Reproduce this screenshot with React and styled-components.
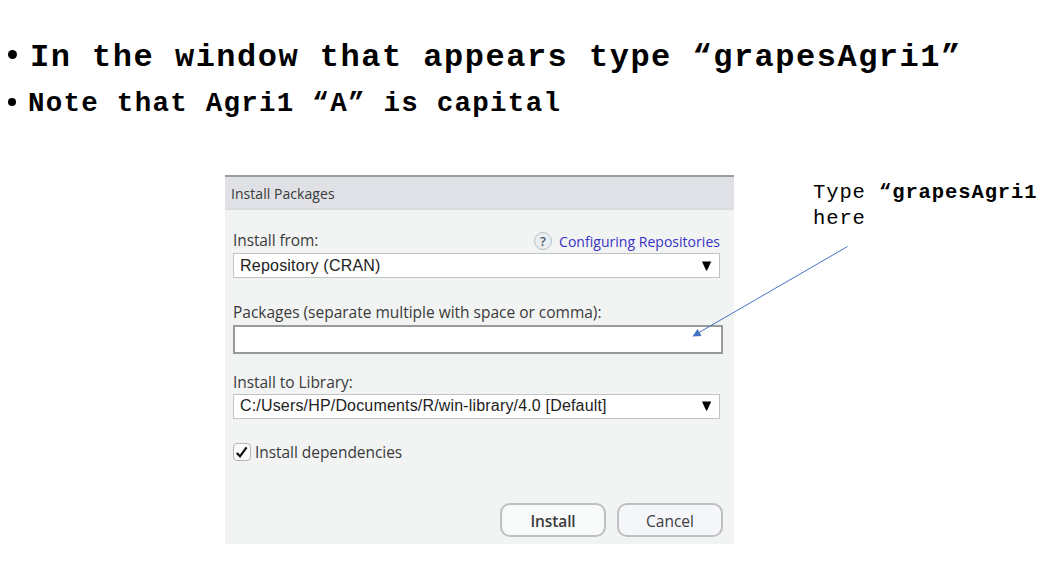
import React from 'react';
import styled, { createGlobalStyle } from 'styled-components';

const GlobalStyle = createGlobalStyle`
  * { box-sizing: border-box; }
  body { margin: 0; background: #fff; overflow: hidden; }
`;

const Slide = styled.main`
  position: relative;
  width: 1039px;
  height: 580px;
  overflow: hidden;
  background: #fff;
  color: #000;
  font-family: 'Courier New', 'Liberation Mono', monospace;
`;

const Bullets = styled.ul`
  list-style: none;
  margin: 0;
  padding: 32px 0 0 7px;
  height: 175px;
`;

const Bullet = styled.li`
  display: flex;
  align-items: center;
  gap: ${(p) => p.$gap}px;
  height: 47px;
  font-size: ${(p) => p.$size}px;
  letter-spacing: ${(p) => p.$track}px;
  font-weight: 700;
  white-space: pre;
`;

const BulletText = styled.span`
  padding-top: ${(p) => p.$drop}px;
`;

const Dot = styled.span`
  flex: none;
  width: ${(p) => p.$size}px;
  height: ${(p) => p.$size}px;
  border-radius: 50%;
  background: #000;
  margin: 0 0 2px 1px;
`;

const Content = styled.div`
  display: flex;
  align-items: flex-start;
  padding-left: 225px;
`;

const Dialog = styled.section`
  flex: none;
  width: 509px;
  height: 369px;
  background: #f2f4f4;
  color: #3a3a3a;
  font-family: 'Open Sans', 'Noto Sans', sans-serif;
`;

const TitleBar = styled.header`
  height: 35px;
  padding: 0 6px;
  border-top: 2px solid #9c9d9e;
  border-bottom: 2px solid #dbdce0;
  background: #e0e1e6;
  font-size: 14px;
  line-height: 34px;
  letter-spacing: ${(p) => p.$track}px;
`;

const Form = styled.div`
  display: flex;
  flex-direction: column;
  padding: 20px 11px 0 8px;
`;

const LabelRow = styled.div`
  display: flex;
  justify-content: space-between;
  align-items: center;
  height: 23px;
  margin-right: 3px;
  margin-top: ${(p) => p.$top || 0}px;
  white-space: nowrap;
`;

const Label = styled.label`
  font-size: 15.5px;
  line-height: 23px;
  padding-top: ${(p) => p.$drop || 0}px;
  padding-bottom: ${(p) => p.$lift || 0}px;
  letter-spacing: ${(p) => p.$track || 0}px;
`;

const Help = styled.a`
  display: flex;
  align-items: center;
  gap: 7px;
  color: #3733c4;
  font-size: 14px;
  letter-spacing: ${(p) => p.$track || 0}px;
`;

const HelpIcon = styled.span`
  display: flex;
  align-items: center;
  justify-content: center;
  width: 18px;
  height: 18px;
  border: 1.5px solid #b7c0c7;
  border-radius: 50%;
  background: #e9eef1;
  color: #4d5c68;
  font-size: 13px;
  font-weight: 600;
  letter-spacing: 0;
  margin-bottom: 2px;
`;

const Select = styled.div`
  display: flex;
  justify-content: space-between;
  align-items: center;
  width: 487px;
  height: 25px;
  padding: 0 7px ${(p) => p.$lift || 0}px 6px;
  border: 1px solid #c2c4c4;
  background: #fff;
  color: #222;
  font-family: 'Liberation Sans', Arial, sans-serif;
  font-size: 16px;
  letter-spacing: ${(p) => p.$track || 0}px;
`;

const TextInput = styled.input`
  width: 490px;
  height: 29px;
  margin-top: 1px;
  border: 2px solid #999b9b;
  background: #fff;
  outline: none;
`;

const CheckRow = styled.label`
  display: flex;
  align-items: center;
  gap: 4px;
  height: 23px;
  margin-top: 21px;
`;

const CheckBox = styled.span`
  display: flex;
  width: 18px;
  height: 18px;
  border: 1.5px solid #b4b6b7;
  border-radius: 4px;
  background: #fcfcfd;
`;

const Actions = styled.footer`
  display: flex;
  justify-content: flex-end;
  gap: 11px;
  margin-top: 40px;
`;

const Button = styled.button`
  width: 106px;
  height: 34px;
  padding: 1px 0 0;
  border: 2px solid #bfc0c1;
  border-radius: 10px;
  background: ${(p) => (p.$primary ? '#f8faf9' : '#f5f6f9')};
  color: #3d3d3f;
  font-family: inherit;
  font-size: 15.5px;
  font-weight: ${(p) => (p.$primary ? 600 : 400)};
  letter-spacing: ${(p) => p.$track || 0}px;
`;

const Note = styled.p`
  margin: 5px 0 0 79px;
  font-size: 20.5px;
  line-height: 26px;
  letter-spacing: 0.9px;
  white-space: nowrap;
`;

const Pointer = styled.svg`
  position: absolute;
  left: 685px;
  top: 240px;
`;

const Caret = () => (
  <svg width="11" height="10" viewBox="0 0 11 10">
    <path d="M1 .5h9.2L6.1 9.5h-1z" fill="#000" />
  </svg>
);

export default function App() {
  return (
    <Slide>
      <GlobalStyle />
      <Bullets>
        <Bullet $size={32} $track={1.5} $gap={13}>
          <Dot $size={9} />
          <BulletText $drop={3}>In the window that appears type “grapesAgri1”</BulletText>
        </Bullet>
        <Bullet $size={27.5} $track={1.27} $gap={12}>
          <Dot $size={8} />
          <BulletText $drop={2}>Note that Agri1 “A” is capital</BulletText>
        </Bullet>
      </Bullets>
      <Content>
        <Dialog>
          <TitleBar $track={0.05}>Install Packages</TitleBar>
          <Form>
            <LabelRow>
              <Label $track={-0.1} $lift={2}>Install from:</Label>
              <Help $track={0.03}>
                <HelpIcon>?</HelpIcon>
                Configuring Repositories
              </Help>
            </LabelRow>
            <Select $track={0.22}>
              Repository (CRAN)
              <Caret />
            </Select>
            <LabelRow $top={23}>
              <Label $track={-0.01}>Packages (separate multiple with space or comma):</Label>
            </LabelRow>
            <TextInput />
            <LabelRow $top={17}>
              <Label $track={-0.05}>Install to Library:</Label>
            </LabelRow>
            <Select $track={0.17} $lift={1}>
              C:/Users/HP/Documents/R/win-library/4.0 [Default]
              <Caret />
            </Select>
            <CheckRow>
              <CheckBox>
                <svg width="15" height="15" viewBox="0 0 15 15">
                  <path d="M2.8 9l3.2 3.3 6.6-9" fill="none" stroke="#111" strokeWidth="2.2" />
                </svg>
              </CheckBox>
              <Label as="span" $track={-0.05} $drop={2}>Install dependencies</Label>
            </CheckRow>
            <Actions>
              <Button $primary $track={-0.1}>Install</Button>
              <Button>Cancel</Button>
            </Actions>
          </Form>
        </Dialog>
        <Note>
          Type <b>“grapesAgri1</b>
          <br />
          here
        </Note>
      </Content>
      <Pointer width="170" height="105" viewBox="0 0 170 105">
        <path d="M162.5 6.5L14 92.5" stroke="#4472c4" strokeWidth="1" />
        <path d="M7.5 96.5L12.5 89L16.5 96z" fill="#4472c4" />
      </Pointer>
    </Slide>
  );
}
